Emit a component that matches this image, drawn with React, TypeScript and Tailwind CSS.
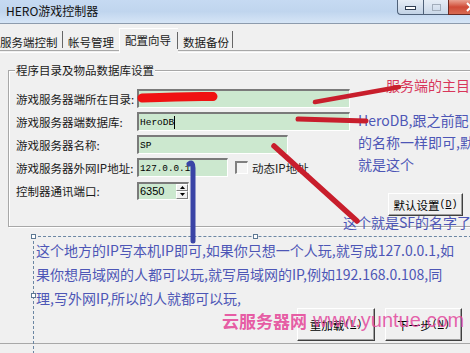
import React from "react";

function Sunken({ w, h = 19, children }: { w: number; h?: number; children?: React.ReactNode }) {
  return (
    <div
      className="flex items-center border-t-2 border-l-2 border-b border-r border-t-[#7a7a7a] border-l-[#7a7a7a] border-b-white border-r-white bg-[#cce8cf]"
      style={{ width: w, height: h }}
    >
      {children}
    </div>
  );
}

function RaisedButton({ w, h, label, acc }: { w: number; h: number; label: string; acc: string }) {
  return (
    <div
      className="flex items-center justify-center border border-t-white border-l-white border-r-[#404040] border-b-[#404040] bg-[#f0f0f0] shadow-[inset_-1px_-1px_0_#a0a0a0] text-[11.5px] leading-[16px]"
      style={{ width: w, height: h }}
    >
      <span>{label}</span>
      <span className="font-['Liberation_Mono',monospace] text-[10px]">
        (<span className="underline">{acc}</span>)
      </span>
    </div>
  );
}

function Row({ label, children }: { label: string; children: React.ReactNode }) {
  return (
    <div className="flex h-[23px] items-center">
      <div className="w-[121px] whitespace-nowrap text-[11.5px] leading-[16px] text-[#1a1a1a]">{label}</div>
      {children}
    </div>
  );
}

function Handle({ x, y }: { x: number; y: number }) {
  return (
    <div
      className="absolute h-[5px] w-[5px] border border-[#5d7893] bg-white"
      style={{ left: x - 2, top: y - 2 }}
    />
  );
}

export default function App() {
  return (
    <div className="relative h-[353px] w-[470px] overflow-hidden bg-[#f0f0f0] text-black font-['Noto_Sans_CJK_SC',sans-serif]">
      {/* Title bar */}
      <div className="flex h-[24px] items-start border-b border-[#8d9bad] bg-linear-to-b from-[#c6daf2] via-[#c0d5ee] to-[#d6e5f6]">
        <span className="mt-[3px] pl-[6px] text-[12px] leading-[16px] text-[#111]">HERO游戏控制器</span>
        <div className="ml-auto mr-[-23px] flex h-[15px]">
          <div className="flex w-[26px] items-center justify-center rounded-bl-[4px] border-b border-l border-[#4f6179] bg-linear-to-b from-[#e6edf6] to-[#c2d2e5]">
            <div className="mt-[2px] h-[4px] w-[11px] border border-[#2f3d52] bg-white" />
          </div>
          <div className="flex w-[25px] items-center justify-center border-b border-l border-[#4f6179] bg-linear-to-b from-[#e6edf6] to-[#c9d7e8]">
            <div className="h-[7px] w-[9px] border border-[#a2adbb]" />
          </div>
          <div className="flex w-[45px] items-center justify-center border-b border-l border-[#6b2a22] bg-linear-to-b from-[#e9a393] via-[#cf4a36] to-[#d86a52]">
            <svg width="12" height="10" viewBox="0 0 12 10">
              <path d="M2 1 L10 9 M10 1 L2 9" stroke="white" strokeWidth="2" />
            </svg>
          </div>
        </div>
      </div>

      {/* Tabs */}
      <div className="flex h-[26px] items-end text-[11.5px] leading-[16px] text-[#1a1a1a]">
        <div className="mb-[2px] flex h-[17px] w-[63px] items-center border-r border-[#666]">
          <span className="relative top-[2px] whitespace-nowrap">服务端控制</span>
        </div>
        <div className="mb-[2px] flex h-[17px] w-[56px] items-center pl-[5px]">
          <span className="relative top-[2px] whitespace-nowrap">帐号管理</span>
        </div>
        <div className="relative z-10 -mb-[3px] flex h-[25px] w-[59px] border-l border-t border-white bg-[#f0f0f0]">
          <span className="whitespace-nowrap pl-[5px] pt-[3px]">配置向导</span>
          <div className="ml-auto mt-[3px] h-[17px] w-px bg-[#666]" />
        </div>
        <div className="mb-[2px] flex h-[17px] w-[55px] items-center border-r border-[#666] pl-[5px]">
          <span className="relative top-[2px] whitespace-nowrap">数据备份</span>
        </div>
      </div>

      {/* Tab panel */}
      <div className="flex h-[294px] flex-col border-y border-[#a8a8a8]">
        <div className="mt-px h-px bg-white" />
        {/* Group box */}
        <div className="relative ml-[8px] mr-[-12px] mt-[17px] h-[157px] border border-[#a8a8a8] pl-[7px] pt-[16px] shadow-[inset_1px_1px_0_#fff,1px_1px_0_#fff]">
          <span className="absolute left-[6px] top-[-9px] whitespace-nowrap bg-[#f0f0f0] px-px text-[11.5px] leading-[16px] text-[#1a1a1a]">
            程序目录及物品数据库设置
          </span>
          <Row label="游戏服务器端所在目录:">
            <Sunken w={213} />
          </Row>
          <Row label="游戏服务器端数据库:">
            <Sunken w={213}>
              <span className="pl-px font-['Liberation_Mono',monospace] text-[9.5px] leading-[13px]">HeroDB</span>
              <span className="h-[13px] w-px bg-black" />
            </Sunken>
          </Row>
          <Row label="游戏服务器名称:">
            <Sunken w={151}>
              <span className="pl-px font-['Liberation_Mono',monospace] text-[9.5px] leading-[13px]">SP</span>
            </Sunken>
          </Row>
          <Row label="游戏服务器外网IP地址:">
            <Sunken w={91}>
              <span className="pl-px font-['Liberation_Mono',monospace] text-[9.3px] leading-[13px]">127.0.0.1</span>
            </Sunken>
            <div className="ml-[7px] h-[13px] w-[13px] border-t-2 border-l-2 border-b border-r border-t-[#808080] border-l-[#808080] border-b-white border-r-white bg-[#f4f4f4]" />
            <span className="ml-[4px] whitespace-nowrap text-[11.5px] leading-[16px] text-[#1a1a1a]">动态IP地址</span>
          </Row>
          <Row label="控制器通讯端口:">
            <Sunken w={52} h={18}>
              <span className="pl-px font-['Liberation_Sans',sans-serif] text-[11px] leading-[13px]">6350</span>
              <div className="ml-auto flex h-full w-[12px] flex-col">
                <div className="flex flex-1 items-center justify-center border border-t-white border-l-white border-b-[#808080] border-r-[#808080] bg-[#f0f0f0]">
                  <svg width="5" height="3" viewBox="0 0 5 3"><path d="M0 3 L2.5 0 L5 3 Z" fill="#000" /></svg>
                </div>
                <div className="flex flex-1 items-center justify-center border border-t-white border-l-white border-b-[#808080] border-r-[#808080] bg-[#f0f0f0]">
                  <svg width="5" height="3" viewBox="0 0 5 3"><path d="M0 0 L2.5 3 L5 0 Z" fill="#000" /></svg>
                </div>
              </div>
            </Sunken>
          </Row>
          <div className="-mt-[9px] ml-[372px]">
            <RaisedButton w={75} h={23} label="默认设置" acc="D" />
          </div>
        </div>

        {/* Bottom buttons */}
        <div className="mt-[81px] flex justify-end gap-[10px] pr-[8px]">
          <RaisedButton w={78} h={33} label="重加载" acc="L" />
          <RaisedButton w={77} h={33} label="下一步" acc="N" />
        </div>
      </div>

      {/* Annotation texts */}
      <div className="absolute left-[386px] top-[74px] whitespace-nowrap text-[14px] leading-[22px] text-[#d8365a]">
        服务端的主目
      </div>
      <div className="absolute left-[358px] top-[109px] whitespace-nowrap text-[14px] leading-[22px] text-[#4d56b6]">
        <div>HeroDB,跟之前配</div>
        <div>的名称一样即可,默</div>
        <div>就是这个</div>
      </div>
      <div className="absolute left-[343px] top-[211px] whitespace-nowrap text-[14px] leading-[22px] text-[#4d56b6]">
        这个就是SF的名字了
      </div>

      {/* Dashed text box */}
      <div className="absolute left-[33px] top-[236px] h-[118px] w-[444px] whitespace-nowrap border border-dashed border-[#6b86a3] pl-[2px] pt-px text-[14px] leading-[24px] text-[#4d56b6]">
        <div>这个地方的IP写本机IP即可,如果你只想一个人玩,就写成127.0.0.1,如</div>
        <div>果你想局域网的人都可以玩,就写局域网的IP,例如192.168.0.108,同</div>
        <div>理,写外网IP,所以的人就都可以玩,</div>
      </div>
      <Handle x={33} y={236} />
      <Handle x={255} y={236} />
      <Handle x={33} y={295} />

      {/* Drawn strokes */}
      <svg className="pointer-events-none absolute left-0 top-0" width="470" height="353" viewBox="0 0 470 353">
        <path d="M142 98 C165 97, 190 96, 213 96.5" stroke="#f01212" strokeWidth="9" strokeLinecap="round" fill="none" />
        <path d="M315 102 L399 87" stroke="#c81e2c" strokeWidth="4.5" strokeLinecap="round" />
        <path d="M298 119 L366 121" stroke="#c81e2c" strokeWidth="5" strokeLinecap="round" />
        <path d="M274 146 L357 221" stroke="#c81e2c" strokeWidth="5.5" strokeLinecap="round" />
        <path d="M189 164 Q193 161 193 168 L193 241" stroke="#3a44a6" strokeWidth="5" strokeLinecap="round" fill="none" />
      </svg>

      {/* Watermark */}
      <div className="absolute left-[222px] top-[310px] whitespace-nowrap text-[17px] font-bold leading-[22px] text-[#e5489a]/90">
        云服务器网
      </div>
      <div className="absolute left-[313px] top-[308px] whitespace-nowrap font-['Liberation_Sans',sans-serif] text-[20px] leading-[24px] text-[#e2479c]/85">
        www.yuntue.com
      </div>
    </div>
  );
}
